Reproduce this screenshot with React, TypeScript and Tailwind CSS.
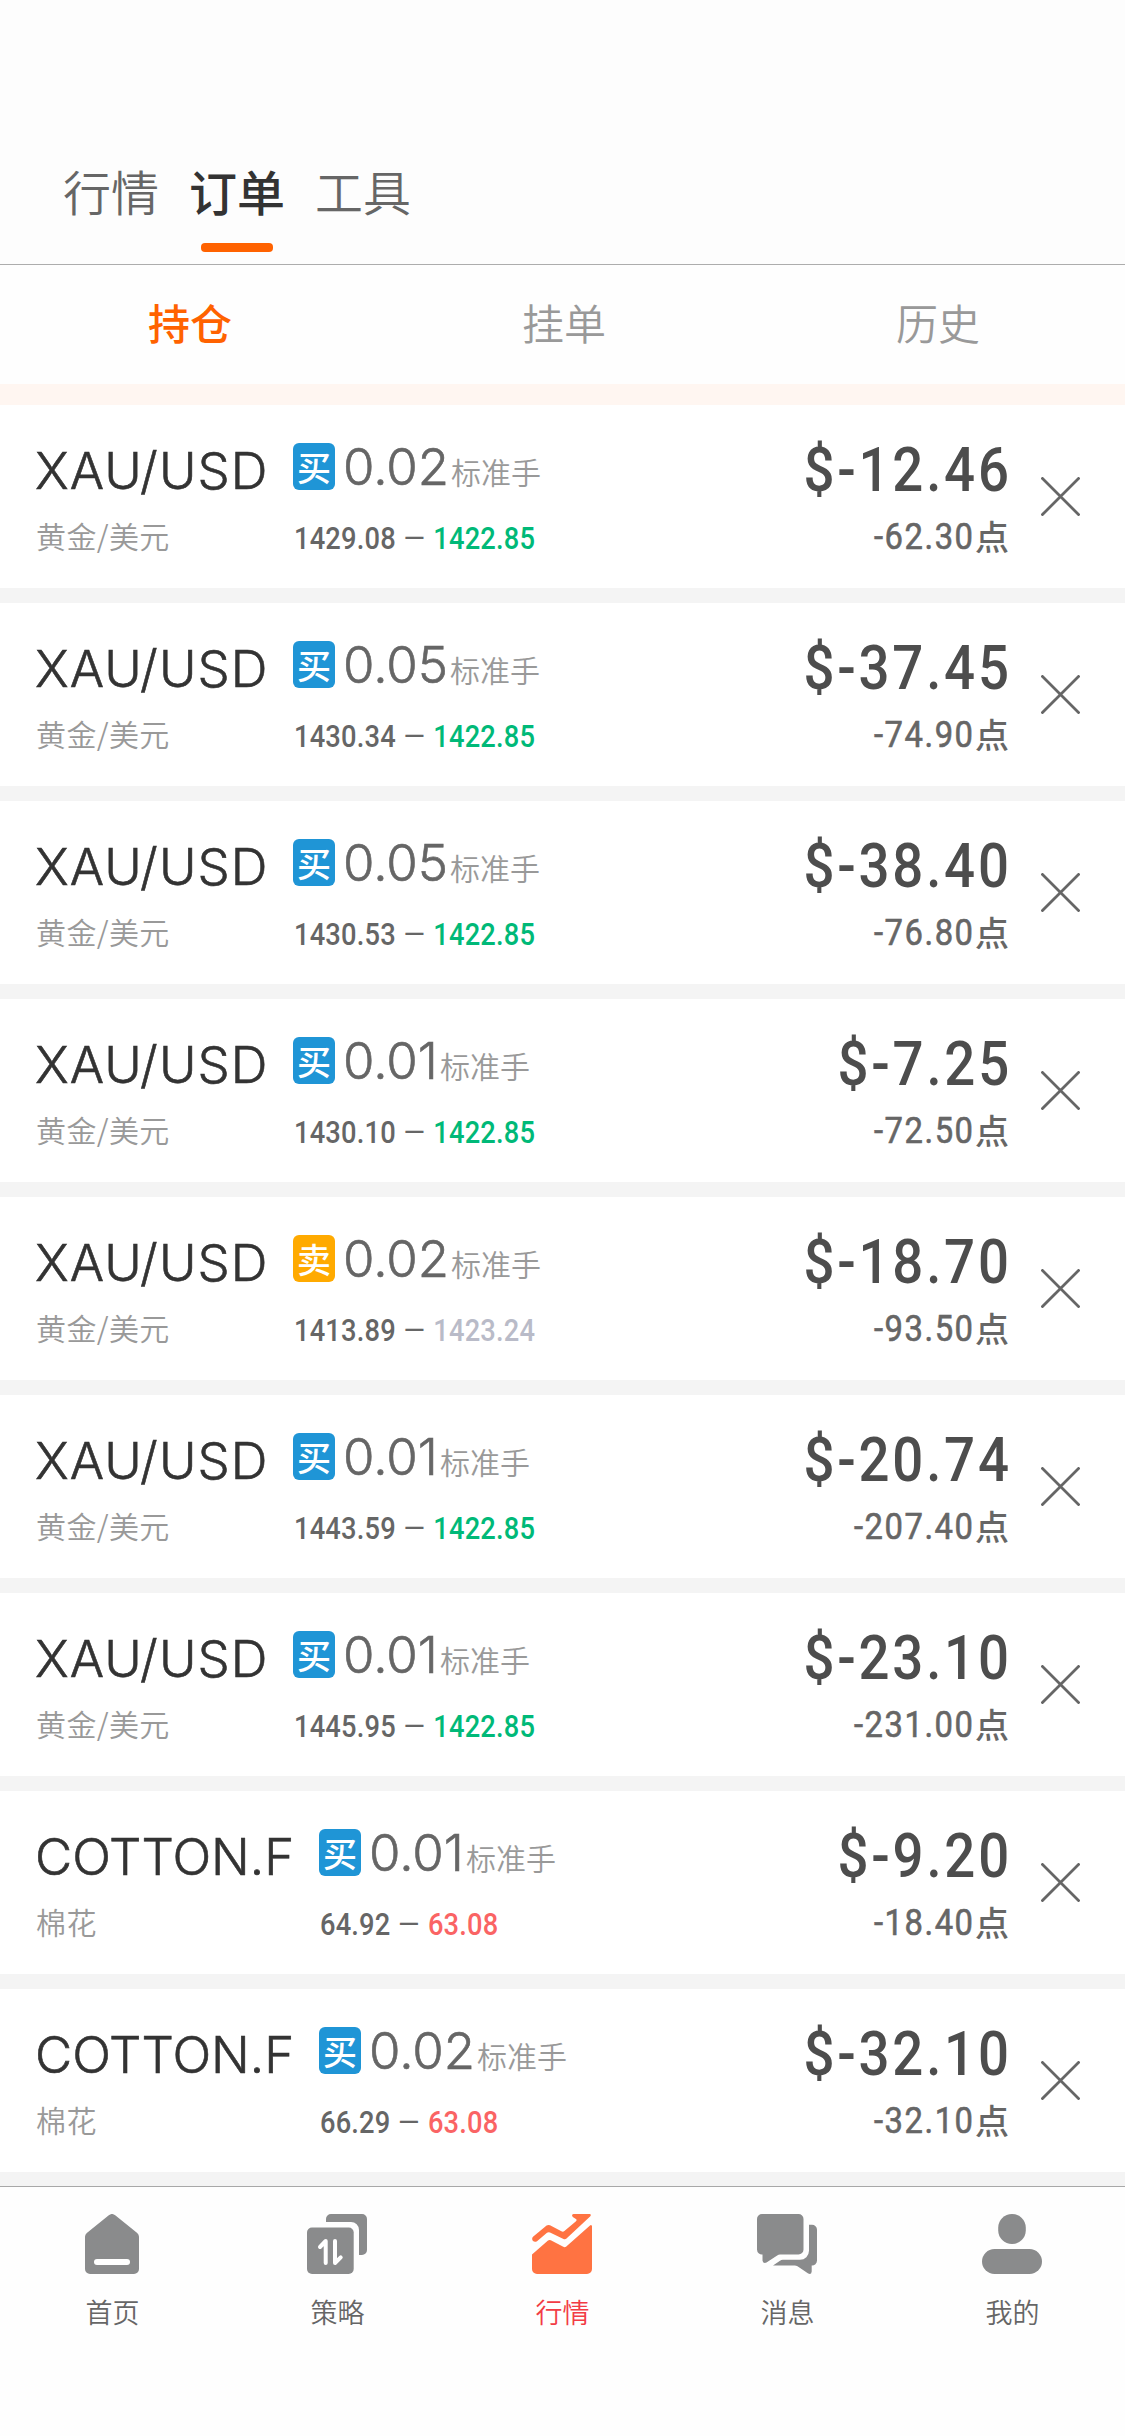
import type { ReactNode } from 'react';

type Tone = 'up' | 'down' | 'flat';

type Order = {
  symbol: string;
  name: string;
  side: '买' | '卖';
  lots: string;
  open: string;
  current: string;
  tone: Tone;
  profit: string;
  points: string;
};

const gold = (side: Order['side'], lots: string, open: string, current: string, tone: Tone, profit: string, points: string): Order => ({
  symbol: 'XAU/USD', name: '黄金/美元', side, lots, open, current, tone, profit, points,
});

const cotton = (lots: string, open: string, profit: string, points: string): Order => ({
  symbol: 'COTTON.F', name: '棉花', side: '买', lots, open, current: '63.08', tone: 'up', profit, points,
});

const orders: Order[] = [
  gold('买', '0.02', '1429.08', '1422.85', 'down', '$-12.46', '-62.30'),
  gold('买', '0.05', '1430.34', '1422.85', 'down', '$-37.45', '-74.90'),
  gold('买', '0.05', '1430.53', '1422.85', 'down', '$-38.40', '-76.80'),
  gold('买', '0.01', '1430.10', '1422.85', 'down', '$-7.25', '-72.50'),
  gold('卖', '0.02', '1413.89', '1423.24', 'flat', '$-18.70', '-93.50'),
  gold('买', '0.01', '1443.59', '1422.85', 'down', '$-20.74', '-207.40'),
  gold('买', '0.01', '1445.95', '1422.85', 'down', '$-23.10', '-231.00'),
  cotton('0.01', '64.92', '$-9.20', '-18.40'),
  cotton('0.02', '66.29', '$-32.10', '-32.10'),
];

const toneClass: Record<Tone, string> = {
  up: 'text-[#fa6464]',
  down: 'text-[#00b978]',
  flat: 'text-[#b9bbc8]',
};

function CloseIcon() {
  return (
    <svg className="mt-[72px] ml-[33px] size-[39px] shrink-0" viewBox="0 0 39 39" fill="none" stroke="#666" strokeWidth="2.8">
      <path d="M0.5 0.5 38.5 38.5M38.5 0.5 0.5 38.5" />
    </svg>
  );
}

function OrderRow({ order }: { order: Order }) {
  const isGold = order.symbol === 'XAU/USD';
  return (
    <li className="flex h-[183px] items-start bg-white pl-[36px] pr-[45px]">
      <div className={isGold ? 'w-[257px] pt-[36px]' : 'w-[283px] pt-[36px]'}>
        <div className={`h-[60px] whitespace-nowrap font-[Inter,sans-serif] text-[51px] font-light leading-[60px] text-[#333] -ml-[1px] [-webkit-text-stroke:0.6px_#333] ${isGold ? 'tracking-[1.1px]' : 'tracking-[0px]'}`}>
          {order.symbol}
        </div>
        <div className="mt-[14px] h-[40px] text-[30px] font-[350] leading-[40px] tracking-[0.4px] text-[#999]">{order.name}</div>
      </div>
      <div className="pt-[38px]">
        <div className="flex h-[49px] items-start">
          <span className={`flex h-[47px] w-[42px] items-center justify-center rounded-[6px] text-[34px] font-medium leading-[47px] text-white ${order.side === '买' ? 'bg-[#1f95d6]' : 'bg-[#ffaa00]'}`}>
            {order.side}
          </span>
          <span className="ml-[8px] font-[Inter,sans-serif] text-[51px] font-light leading-[47px] [-webkit-text-stroke:0.6px_#666] text-[#666]">{order.lots}</span>
          <span className="mt-[13px] ml-[2px] text-[30px] font-[350] leading-[30px] text-[#999]">标准手</span>
        </div>
        <div className="mt-[27px] ml-[1px] flex h-[40px] origin-left scale-x-[0.88] items-center font-[Roboto,sans-serif] text-[31px] font-medium leading-[40px] tracking-[0.2px] text-[#666]">
          <span>{order.open}</span>
          <span className="mx-[11px] scale-x-[1.35] font-normal">–</span>
          <span className={toneClass[order.tone]}>{order.current}</span>
        </div>
      </div>
      <div className="ml-auto flex flex-col items-end pt-[36px]">
        <div className="-mr-[4px] h-[60px] origin-right scale-x-[0.895] font-[Roboto,sans-serif] text-[61px] font-medium leading-[59px] tracking-[3.1px] text-[#4d4d4d]">
          {order.profit}
        </div>
        <div className="-mr-[1px] mt-[16px] flex h-[40px] items-start text-[#666]">
          <span className="origin-right scale-x-[0.91] font-[Roboto,sans-serif] text-[36px] leading-[40px] tracking-[1.7px] [-webkit-text-stroke:0.6px_#666]">{order.points}</span>
          <span className="text-[34px] font-medium leading-[38px]">点</span>
        </div>
      </div>
      <CloseIcon />
    </li>
  );
}

const navItems: { label: string; active?: boolean; icon: ReactNode }[] = [
  {
    label: '首页',
    icon: (
      <>
        <path d="M26.8 1.3a5 5 0 0 1 6.4 0L55.2 19a5 5 0 0 1 1.8 3.8V55a5 5 0 0 1-5 5H8a5 5 0 0 1-5-5V22.8A5 5 0 0 1 4.8 19Z" />
        <rect x="12" y="45" width="36" height="6" rx="3" fill="#fff" />
      </>
    ),
  },
  {
    label: '策略',
    icon: (
      <>
        <path d="M19 8V5a5 5 0 0 1 5-5h31a5 5 0 0 1 5 5v31a5 5 0 0 1-5 5h-3V16a8 8 0 0 0-8-8Z" />
        <rect y="13.5" width="46.7" height="46.5" rx="5" />
        <path d="M18.7 49V27L13 33M28 27v22l5.7-5.7" fill="none" stroke="#fff" strokeWidth="4" strokeLinecap="round" strokeLinejoin="round" />
      </>
    ),
  },
  {
    label: '行情',
    active: true,
    icon: (
      <>
        <path d="M0 40.5 16 26.6q1.2-1 2.8-.3L31.3 32.8q1.6.8 3-.3L58 11.4q1.500-1 2 .9V55a5 5 0 0 1-5 5H5a5 5 0 0 1-5-5Z" />
        <path d="M1 22.8 14.6 11.6q1.600-1.200 3.400-.3l11.400 6q1.600.8 3-.3L44 7.200q1.300-1.200-.1-2.200L40.800 3Q39 .6 41.500 0H57.500q2.300.2.600 2.600L34.500 24.600q-1.400 1.200-3 .4L18 18.500q-1.700-.7-3 .3L5 27.200Q2.600 28.600.800 26.700-.6 24.600 1 22.800Z" />
      </>
    ),
  },
  {
    label: '消息',
    icon: (
      <>
        <path d="M5 0h36.500a5 5 0 0 1 5 5v30.500a5 5 0 0 1-5 5H23q-1.500 0-2.800.9L9.500 48.600Q6.200 50 5.500 46.500V40.500A5 5 0 0 1 0 35.500V5a5 5 0 0 1 5-5Z" />
        <path d="M52 10.700h3a5 5 0 0 1 5 5V46.500a5 5 0 0 1-5.300 5V57.500q-.4 3.500-3.500 2.100L40.500 52.300q-1.300-.8-2.800-.8H16L23 46.700q1.300-.9 2.800-.9H43a9 9 0 0 0 9-9Z" />
      </>
    ),
  },
  {
    label: '我的',
    icon: (
      <>
        <rect x="16.200" width="27.600" height="30" rx="13.800" />
        <rect y="35" width="60" height="25" rx="12.500" />
      </>
    ),
  },
];

export default function App() {
  return (
    <div className="flex h-[2436px] w-[1125px] flex-col overflow-hidden bg-[#fefefe] font-['Noto_Sans_CJK_SC',sans-serif]">
      <header className="flex h-[265px] shrink-0 items-start gap-[30px] border-b border-[#adadad] bg-[#fdfdfd] pl-[63px] pt-[160px] text-[48px] leading-[60px]">
        <span className="font-[350] text-[#666]">行情</span>
        <span className="flex flex-col items-center font-medium text-[#333]">
          订单
          <span className="mt-[23px] h-[9px] w-[72px] rounded-[4px] bg-[#ff6200]" />
        </span>
        <span className="font-[350] text-[#666]">工具</span>
      </header>
      <nav className="grid h-[119px] shrink-0 grid-cols-3 pl-[3px] text-center text-[42px] leading-[113px] text-[#999]">
        <span className="font-medium text-[#ff6200]">持仓</span>
        <span className="font-[350]">挂单</span>
        <span className="font-[350]">历史</span>
      </nav>
      <div className="h-[21px] shrink-0 bg-[#fff6f1]" />
      <ul className="flex h-[1781px] shrink-0 flex-col gap-[15px] bg-[#f4f4f4]">
        {orders.map((order) => (
          <OrderRow key={order.open} order={order} />
        ))}
      </ul>
      <footer className="grid flex-1 grid-cols-5 border-t border-[#a8a8a8] bg-[#fefefe] pt-[27px]">
        {navItems.map((item) => (
          <div key={item.label} className="flex flex-col items-center">
            <svg className={`mr-px size-[60px] ${item.active ? 'fill-[#ff7342]' : 'fill-[#8a8b8c]'}`} viewBox="0 0 60 60">
              {item.icon}
            </svg>
            <span className={`mt-[23px] text-[27px] font-[350] leading-[30px] ${item.active ? 'text-[#f23c45]' : 'text-[#666]'}`}>{item.label}</span>
          </div>
        ))}
      </footer>
    </div>
  );
}
